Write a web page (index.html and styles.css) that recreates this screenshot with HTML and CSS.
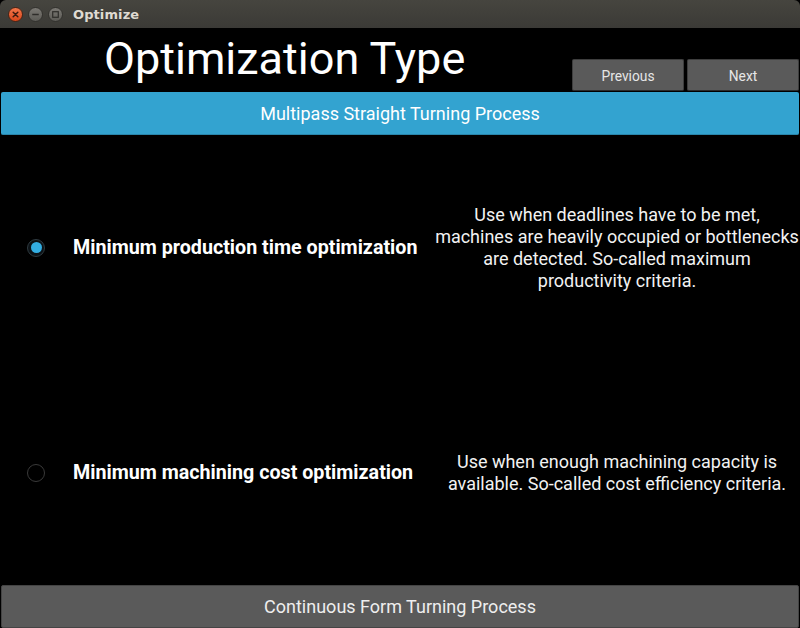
FILE: index.html
```html
<!DOCTYPE html>
<html>
<head>
<meta charset="utf-8">
<link rel="stylesheet" href="styles.css">
</head>
<body>
<div class="window">
  <div class="titlebar">
    <div class="wbtns">
      <span class="wbtn close"><svg width="14" height="14" viewBox="0 0 14 14"><path d="M4.5 4.5 L9.5 9.5 M9.5 4.5 L4.5 9.5" stroke="#3a1a10" stroke-width="1.6" stroke-linecap="round"/></svg></span>
      <span class="wbtn"><svg width="14" height="14" viewBox="0 0 14 14"><path d="M3.5 7 H10.5" stroke="#2e2d2a" stroke-width="1.6"/></svg></span>
      <span class="wbtn"><svg width="14" height="14" viewBox="0 0 14 14"><rect x="4" y="4" width="6" height="6" fill="none" stroke="#2e2d2a" stroke-width="1.3"/></svg></span>
    </div>
    <span class="wtitle">Optimize</span>
  </div>
  <div class="content">
    <div class="header">
      <h1 class="title">Optimization Type</h1>
      <div class="navs">
        <button class="btn">Previous</button>
        <button class="btn">Next</button>
      </div>
    </div>
    <div class="bar active">Multipass Straight Turning Process</div>
    <div class="options">
      <div class="option">
        <span class="radio checked"></span>
        <span class="label">Minimum production time optimization</span>
        <span class="desc">Use when deadlines have to be met, machines are heavily occupied or bottlenecks are detected. So-called maximum productivity criteria.</span>
      </div>
      <div class="option">
        <span class="radio"></span>
        <span class="label">Minimum machining cost optimization</span>
        <span class="desc">Use when enough machining capacity is available. So-called cost efficiency criteria.</span>
      </div>
    </div>
    <div class="bar grey">Continuous Form Turning Process</div>
  </div>
</div>
</body>
</html>
```
FILE: styles.css
```css
* { box-sizing: border-box; }
html, body { margin: 0; padding: 0; background: #000; }
body { width: 800px; height: 628px; overflow: hidden; font-family: Roboto, "Liberation Sans", sans-serif; }
.window { display: flex; flex-direction: column; height: 628px; }
.titlebar {
  height: 28px; flex: none;
  background: linear-gradient(#46453f, #3b3a36);
  border-radius: 6px 6px 0 0;
  display: flex; align-items: center; padding-left: 8px;
}
.wbtns { display: flex; gap: 5px; }
.wbtn {
  width: 15px; height: 15px; border-radius: 50%;
  background: linear-gradient(#7a7873, #5c5b56);
  border: 1px solid #33322e;
  display: flex; align-items: center; justify-content: center;
}
.wbtn svg { width: 13px; height: 13px; }
.wbtn.close { background: linear-gradient(#f3764a, #d9471b); border-color: #4a2415; }
.wtitle {
  margin-left: 10px; color: #dfdbd2; font-family: "DejaVu Sans", sans-serif;
  font-weight: bold; font-size: 13px; letter-spacing: 0.1px;
}
.content { flex: 1; display: flex; flex-direction: column; background: #000; }
.header { height: 64px; display: flex; align-items: flex-end; justify-content: space-between; }
.title {
  margin: 0 0 0 104px; align-self: flex-start; padding-top: 5px;
  font-weight: 400; font-size: 45px; color: #fff; line-height: 52px;
}
.navs { display: flex; gap: 3px; padding-right: 1px; padding-bottom: 1px; }
.btn {
  width: 112px; height: 32px; background: #5a5a5a; color: #e6e6e6;
  border: 1px solid #3e3e3e; border-bottom-color: #2a2a2a; border-radius: 2px;
  font-family: Roboto, sans-serif; font-size: 13.8px; padding: 2px 0 0 0;
}
.bar {
  margin: 0 1px; height: 43px; display: flex; align-items: center; justify-content: center;
  font-size: 18px; color: #fff; border-radius: 2px;
}
.bar.active { background: #33a3d0; border-bottom: 1px solid #2a86ab; }
.bar.grey { background: #5a5a5a; color: #eee; border: 1px solid #444; height: 43px; }
.options { flex: 1; display: flex; flex-direction: column; }
.option { flex: 1; display: flex; align-items: center; }
.radio {
  flex: none; width: 18px; height: 18px; border-radius: 50%; margin-left: 27px;
  border: 1.5px solid #3a3a3a; background: #000;
  display: flex; align-items: center; justify-content: center;
}
.radio.checked { border-color: #2f3a40; background: #0c1216; }
.radio.checked::after { content: ""; width: 11px; height: 11px; border-radius: 50%; background: #33aee2; }
.label { margin-left: 28px; width: 360px; flex: none; font-weight: 700; font-size: 19.7px; color: #fff; }
.desc { width: 364px; flex: none; margin: 0 1px 0 auto; text-align: center; font-size: 18px; line-height: 22px; color: #f2f2f2; }
```
